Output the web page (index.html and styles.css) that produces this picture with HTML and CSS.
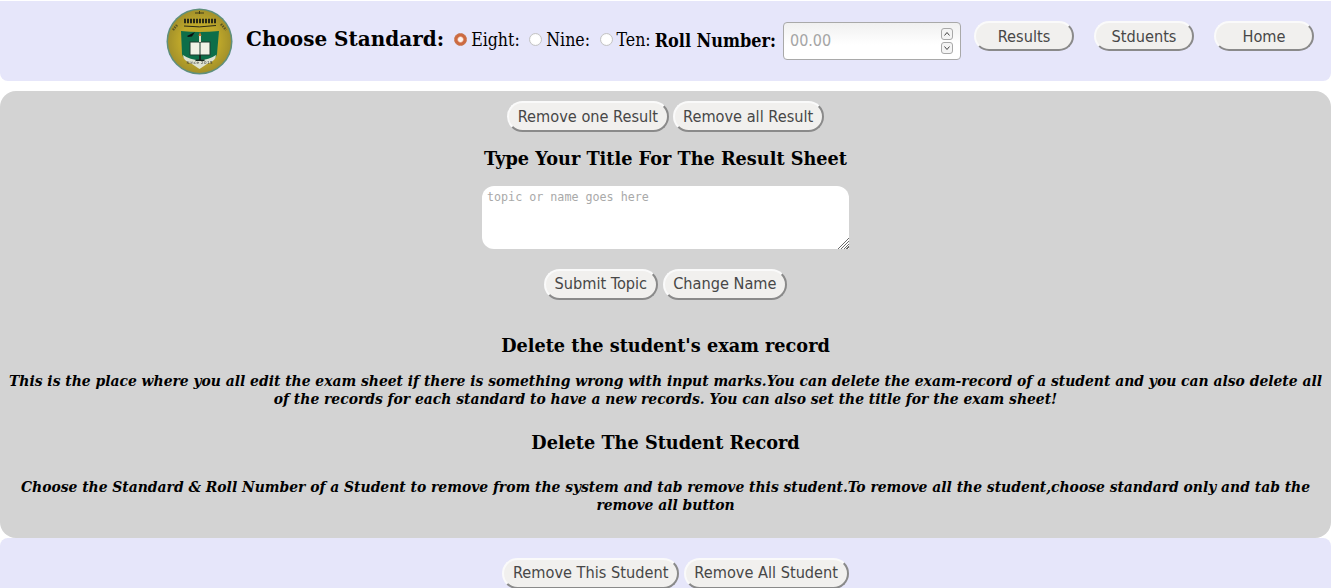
FILE: index.html
```html
<!DOCTYPE html>
<html lang="en">
<head>
    <meta charset="UTF-8">
    <meta name="viewport" content="width=device-width, initial-scale=1.0">
    <title>Exam Records</title>
    <link rel="stylesheet" href="styles.css">
</head>
<body>
    <header class="top-bar">
        <svg class="logo" viewBox="0 0 67 67" role="img" aria-label="School logo">
            <defs>
                <filter id="soft"><feGaussianBlur stdDeviation="0.45"/></filter>
                <radialGradient id="gold">
                    <stop offset="0.6" stop-color="#bfa82c"/>
                    <stop offset="1" stop-color="#a3912c"/>
                </radialGradient>
            </defs>
            <g filter="url(#soft)">
                <circle cx="33.5" cy="33.5" r="33" fill="#5f8f7c"/>
                <circle cx="33.5" cy="33.5" r="31.5" fill="url(#gold)"/>
                <path d="M33.5 3 v3 M29 5 h9" stroke="#3c3a18" stroke-width="1"/>
                <path d="M7 22 L11 17 M55 16 L60 22" stroke="#5a5420" stroke-width="2.5" stroke-dasharray="1.5 1"/>
                <path d="M15 23 Q33 25 53 23 L51 46 Q50 52 41 55 L33.5 60 L26 55 Q17 52 16 46 Z" fill="#0f6e4a"/>
                <path d="M17 47 Q24 52 33.5 52 Q43 52 50 47 Q50 53 41 56 L33.5 61 L26 56 Q17 53 17 47 Z" fill="#dfe3d0"/>
                <path d="M18 13 H50" stroke="#2c2a14" stroke-width="4.5" stroke-dasharray="2 1"/>
                <path d="M18 18 Q33 20 50 17.5" stroke="#2a2a14" stroke-width="1" fill="none"/>
                <path d="M21 28 L29 24 L26 28.5 L22 29 Z" fill="#111"/>
                <rect x="24" y="34" width="20" height="13" fill="#f1f1e6" stroke="#1d3b2e"/>
                <line x1="34" y1="34" x2="34" y2="47" stroke="#1d3b2e"/>
                <rect x="33" y="28" width="2" height="6" fill="#e8e0c8"/>
                <path d="M34 24 L35.5 28 L32.5 28 Z" fill="#d0762a"/>
                <rect x="33" y="47" width="2" height="6" fill="#13251d"/>
                <rect x="29.5" y="51.5" width="9" height="1.5" fill="#13251d"/>
                <text x="33.5" y="56" font-size="4" text-anchor="middle" fill="#333" font-family="DejaVu Sans" textLength="26">Since 2015</text>
            </g>
        </svg>
        <h2 class="choose-title">Choose Standard:</h2>
        <label class="std-option"><input type="radio" name="standard" checked> Eight:</label>
        <label class="std-option"><input type="radio" name="standard"> Nine:</label>
        <label class="std-option"><input type="radio" name="standard"> Ten:</label>
        <b class="roll-label">Roll Number:</b>
        <div class="roll-field">
            <input type="text" placeholder="00.00">
            <div class="spin">
                <span class="spin-btn"><svg viewBox="0 0 10 10"><path d="M2.5 6.5 L5 3.5 L7.5 6.5" /></svg></span>
                <span class="spin-btn"><svg viewBox="0 0 10 10"><path d="M2.5 3.5 L5 6.5 L7.5 3.5" /></svg></span>
            </div>
        </div>
        <nav class="top-nav">
            <button class="btn btn-nav">Results</button>
            <button class="btn btn-nav">Stduents</button>
            <button class="btn btn-nav">Home</button>
        </nav>
    </header>

    <main class="panel">
        <div class="btn-row">
            <button class="btn">Remove one Result</button>
            <button class="btn">Remove all Result</button>
        </div>
        <h3 class="title-topic">Type Your Title For The Result Sheet</h3>
        <textarea class="topic-box" placeholder="topic or name goes here"></textarea>
        <div class="btn-row btn-row-low">
            <button class="btn">Submit Topic</button>
            <button class="btn">Change Name</button>
        </div>
        <h3 class="title-delete">Delete the student's exam record</h3>
        <p class="note note-first">This is the place where you all edit the exam sheet if there is something wrong with input marks.You can delete the exam-record of a student and you can also delete all of the records for each standard to have a new records. You can also set the title for the exam sheet!</p>
        <h3 class="title-record">Delete The Student Record</h3>
        <p class="note note-last">Choose the Standard &amp; Roll Number of a Student to remove from the system and tab remove this student.To remove all the student,choose standard only and tab the remove all button</p>
    </main>

    <footer class="bottom-bar">
        <div class="btn-row btn-row-low">
            <button class="btn">Remove This Student</button>
            <button class="btn">Remove All Student</button>
        </div>
    </footer>
</body>
</html>
```

FILE: styles.css
```css
html, body {
    height: 100%;
    overflow: hidden;
}
body {
    margin: 0;
    padding-top: 1px;
    box-sizing: border-box;
    background-color: #fff;
    font-family: "DejaVu Serif", serif;
    color: #000;
}
.top-bar {
    display: flex;
    align-items: center;
    height: 80px;
    padding-left: 166px;
    background-color: #e6e6fa;
    border-radius: 0 0 8px 8px;
}
.logo {
    width: 67px;
    height: 67px;
    margin-right: 13px;
    flex-shrink: 0;
}
.choose-title {
    margin: 0 10px 4px 0;
    font-size: 20px;
    font-weight: bold;
    white-space: nowrap;
}
.std-option {
    display: flex;
    align-items: center;
    margin: 0 9.5px 2px 0;
    font-size: 17.6px;
    font-stretch: condensed;
    white-space: nowrap;
}
.std-option:last-of-type {
    margin-right: 4px;
}
.std-option input {
    appearance: none;
    width: 13px;
    height: 13px;
    margin: 0 4px 2px 0;
    border: 1px solid #c4c4c4;
    border-radius: 50%;
    background: radial-gradient(circle, #fff 50%, #f1f1f1);
}
.std-option input:checked {
    border-color: #c9764e;
    background: radial-gradient(circle, #fdf3ec 0 2px, #d06a40 3.5px, #c46a42);
}
.roll-label {
    margin: 0 7px 2px 0;
    font-size: 17.9px;
    font-stretch: condensed;
    white-space: nowrap;
}
.roll-field {
    display: flex;
    align-items: center;
    box-sizing: border-box;
    width: 178px;
    height: 38px;
    margin-right: 13px;
    padding: 0 7px 0 6px;
    border: 1px solid #a9a9a9;
    border-radius: 4px;
    background: linear-gradient(#f0f0f0, #ffffff 60%);
}
.roll-field input {
    flex: 1;
    min-width: 0;
    margin-bottom: 2px;
    padding: 0;
    border: none;
    outline: none;
    background: transparent;
    font-family: "DejaVu Sans", sans-serif;
    font-stretch: condensed;
    font-size: 16px;
}
.roll-field input::placeholder {
    color: #a5a5a5;
}
.spin {
    display: flex;
    flex-direction: column;
    gap: 2px;
}
.spin-btn {
    display: block;
    width: 12px;
    height: 12px;
    border: 1px solid #a8a8a8;
    border-radius: 3px;
    box-sizing: border-box;
    background: #f4f4f4;
}
.spin-btn svg {
    display: block;
    width: 10px;
    height: 10px;
}
.spin-btn path {
    fill: none;
    stroke: #444;
    stroke-width: 1;
}
.top-nav {
    display: flex;
    gap: 20px;
    margin-bottom: 10px;
}
.btn {
    box-sizing: border-box;
    height: 31px;
    padding: 0 8.5px;
    border: 2px solid;
    border-color: #fafafa #8a8a8a #8a8a8a #fafafa;
    border-radius: 16px;
    background-color: #f1f0ee;
    color: #474747;
    font-family: "DejaVu Sans", sans-serif;
    font-stretch: condensed;
    font-size: 16.2px;
    white-space: nowrap;
}
.btn-nav {
    width: 100px;
    height: 30px;
}
.panel {
    box-sizing: border-box;
    height: 447px;
    margin-top: 10px;
    padding-top: 10px;
    background-color: #d3d3d3;
    border-radius: 16px;
    text-align: center;
}
.btn-row {
    display: flex;
    justify-content: center;
    gap: 4px;
}
.btn-row-low {
    gap: 5px;
}
.btn-row-low .btn {
    padding-bottom: 2px;
}
.panel h3 {
    margin: 0;
    font-size: 17.7px;
    font-weight: bold;
    line-height: 22px;
}
.panel .title-topic {
    margin-top: 16px;
}
.topic-box {
    display: block;
    box-sizing: border-box;
    width: 367px;
    height: 63px;
    margin: 16px auto 20px;
    padding: 4px 5px;
    border: none;
    border-radius: 12px;
    outline: none;
    background: #fff;
    font-family: "DejaVu Sans Mono", monospace;
    font-size: 11.7px;
}
.topic-box::placeholder {
    color: #a9a9a9;
}
.topic-box::-webkit-resizer {
    background:
        linear-gradient(135deg, #fff 60%, transparent 60%),
        repeating-linear-gradient(135deg, #fff 0 1px, #6a6a6a 1px 2px);
}
.panel .title-delete {
    margin-top: 35px;
}
.note {
    margin: 0;
    padding: 0 6px;
    font-size: 15.45px;
    font-stretch: condensed;
    font-style: italic;
    font-weight: bold;
    line-height: 18px;
}
.note-first {
    margin-top: 15px;
}
.panel .title-record {
    margin-top: 24px;
}
.note-last {
    margin-top: 24px;
}
.bottom-bar {
    box-sizing: border-box;
    height: 60px;
    padding: 20px 0 0 20px;
    background-color: #e6e6fa;
    border-radius: 8px 8px 0 0;
}
```
